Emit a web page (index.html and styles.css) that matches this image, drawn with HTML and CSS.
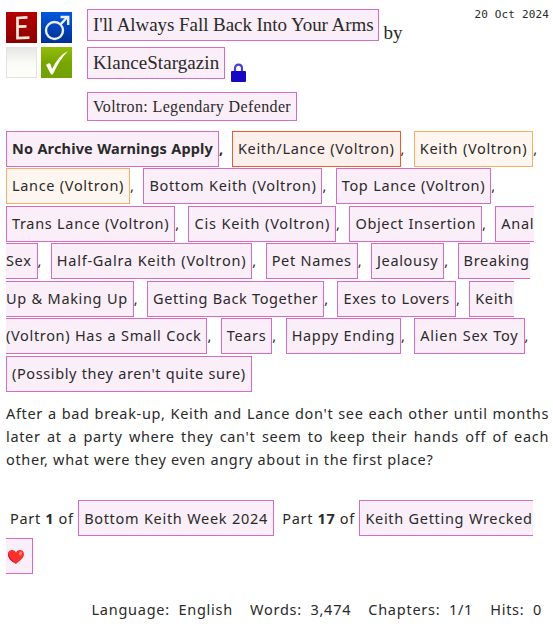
FILE: index.html
```
<!DOCTYPE html>
<html lang="en">
<head>
  <meta charset="UTF-8">
  <title>I'll Always Fall Back Into Your Arms</title>
  <link rel="stylesheet" href="styles.css">
</head>
<body>
  <article class="blurb">
    <header class="header">
      <div class="required-tags">
        <svg class="symbol" viewBox="0 0 31 31">
          <defs>
            <linearGradient id="red" x2="0" y2="1"><stop offset="0" stop-color="#b50000"/><stop offset="1" stop-color="#8c0000"/></linearGradient>
            <linearGradient id="blue" x2="0" y2="1"><stop offset="0" stop-color="#0057e0"/><stop offset="1" stop-color="#003193"/></linearGradient>
            <linearGradient id="green" x2="0" y2="1"><stop offset="0" stop-color="#91bd0b"/><stop offset=".5" stop-color="#78a600"/><stop offset="1" stop-color="#72a000"/></linearGradient>
            <linearGradient id="blank" x2="0" y2="1"><stop offset="0" stop-color="#e6e6e6"/><stop offset=".5" stop-color="#fafaf7"/><stop offset="1" stop-color="#fffffa"/></linearGradient>
          </defs>
          <rect width="31" height="31" fill="url(#red)"/>
          <path d="M21.500 5.3L11.500 6V26L23.500 25.7M11 14.7L20.5 14.3" fill="none" stroke="#eee9dc" stroke-width="2.7"/>
        </svg>
        <svg class="symbol" viewBox="0 0 31 31">
          <rect width="31" height="31" fill="url(#blue)"/>
          <circle cx="13.5" cy="18.5" r="8.5" fill="none" stroke="#e9eee9" stroke-width="2.4"/>
          <path d="M19.5 12.300L26.5 5M19.5 5H27.2V13" fill="none" stroke="#e9eee9" stroke-width="2.4"/>
        </svg>
        <svg class="symbol" viewBox="0 0 31 31">
          <rect x=".5" y=".5" width="30" height="30" fill="url(#blank)" stroke="#e3e3e3"/>
        </svg>
        <svg class="symbol" viewBox="0 0 31 31">
          <rect width="31" height="31" fill="url(#green)"/>
          <path d="M5 18Q8 15 9.500 17L11 22Q18 8 27 4Q19 12 12.500 26Q11 29 9.500 26.500Z" fill="#fffff6"/>
        </svg>
      </div>
      <div class="heading">
        <h4 class="title"><a class="tag work">I'll Always Fall Back Into Your Arms</a> <span class="by">by</span></h4>
        <h4 class="title"><a class="tag author">KlanceStargazin</a>
          <svg class="lock" viewBox="0 0 15 19">
            <path d="M4 9V5.500Q4 1.700 7.500 1.700T11 5.500V9" fill="none" stroke="#4a3fd0" stroke-width="2.2"/>
            <rect y="8" width="15" height="11" rx="1" fill="#1608c4"/>
          </svg>
        </h4>
        <h5 class="fandom"><a class="tag">Voltron: Legendary Defender</a></h5>
      </div>
      <p class="date">20 Oct 2024</p>
    </header>

    <div class="tags">
      <strong class="warning"><a class="tag">No Archive Warnings Apply</a>,</strong>
      <a class="tag relationship">Keith/Lance (Voltron)</a>,
      <a class="tag character">Keith (Voltron)</a>,<br>
      <a class="tag character">Lance (Voltron)</a>,
      <a class="tag">Bottom Keith (Voltron)</a>,
      <a class="tag">Top Lance (Voltron)</a>,<br>
      <a class="tag">Trans Lance (Voltron)</a>,
      <a class="tag wide">Cis Keith (Voltron)</a>,
      <a class="tag">Object Insertion</a>,
      <a class="tag">Anal<br>Sex</a>,
      <a class="tag wide">Half-Galra Keith (Voltron)</a>,
      <a class="tag">Pet Names</a>,
      <a class="tag">Jealousy</a>,
      <a class="tag">Breaking<br>Up &amp; Making Up</a>,
      <a class="tag narrow">Getting Back Together</a>,
      <a class="tag">Exes to Lovers</a>,
      <a class="tag">Keith<br>(Voltron) Has a Small Cock</a>,
      <a class="tag">Tears</a>,
      <a class="tag">Happy Ending</a>,
      <a class="tag wide">Alien Sex Toy</a>,<br>
      <a class="tag narrow">(Possibly they aren't quite sure)</a>
    </div>

    <p class="summary">After a bad break-up, Keith and Lance don't see each other until months later at a party where they can't seem to keep their hands off of each other, what were they even angry about in the first place?</p>

    <div class="series">
      <span class="part">Part <strong>1</strong> of <a class="tag">Bottom Keith Week 2024</a></span>
      <span class="part second">Part <strong>17</strong> of <a class="tag">Keith Getting Wrecked<br><svg class="heart" viewBox="0 0 16 14">
        <path d="M8 14C5.500 11.500 0 8.500 0 4.200C0-.5 6-1.400 8 2.500C10-1.400 16-.5 16 4.200C16 8.500 10.500 11.500 8 14Z" fill="#f92f2c"/>
        <path d="M1 2C-.5 6 3 9 8 14C3 11.500 0 8 0 4.500Q0 3 1 2Z" fill="#c9123f"/>
        <ellipse cx="12.500" cy="3.500" rx="1.500" ry="2" fill="#ff8274" transform="rotate(30 12.5 3.5)"/>
      </svg></a></span>
    </div>

    <dl class="stats">
      <dt>Language:</dt><dd>English</dd>
      <dt>Words:</dt><dd>3,474</dd>
      <dt>Chapters:</dt><dd>1/1</dd>
      <dt>Hits:</dt><dd>0</dd>
    </dl>
  </article>
</body>
</html>
```

FILE: styles.css
```
body {
  margin: 0;
  background: #fff;
  color: #2a2a2a;
  font-family: "Noto Sans", "Open Sans", sans-serif;
  font-size: 14.5px;
  letter-spacing: 0.66px;
}

.blurb {
  padding: 9px 4px 0 6px;
}

.header {
  display: flex;
  height: 120.7px;
}

.required-tags {
  display: grid;
  grid-template-columns: 31px 31px;
  grid-template-rows: 31px 31px;
  align-content: start;
  gap: 4px;
  padding-top: 3px;
}

.symbol {
  display: block;
  width: 31px;
  height: 31px;
}

.heading {
  flex: 1;
  margin-left: 15px;
  white-space: nowrap;
}

.title,
.fandom {
  display: flex;
  margin: 0;
  font-family: "Liberation Serif", serif;
  font-weight: normal;
  letter-spacing: 0;
}

.title {
  height: 38px;
  font-size: 19px;
  line-height: 30px;
}

.title .tag,
.fandom .tag {
  padding: 0 5px;
  word-spacing: 0;
}

.title .tag {
  height: 30px;
}

.work {
  letter-spacing: -0.06px;
}

.author {
  letter-spacing: 0.07px;
}

.by {
  margin: 9px 0 0 4px;
}

.lock {
  width: 15px;
  height: 19px;
  margin: 16px 0 0 6px;
}

.fandom {
  margin-top: 7px;
  font-size: 16px;
  letter-spacing: 0.37px;
}

.fandom .tag {
  height: 27px;
  line-height: 27px;
}

.date {
  margin: -1px 0 0;
  font: 11px/13px "DejaVu Sans Mono", monospace;
  letter-spacing: 0.15px;
}

.tag {
  padding: 6px 5px 8px;
  border: 1px solid #d56cc0;
  background: #faeef9;
  word-spacing: 0.3px;
}

.wide {
  letter-spacing: 0.75px;
}

.narrow {
  letter-spacing: 0.6px;
}

.relationship {
  border-color: #ee5a32;
  background: #fdefeb;
}

.character {
  border-color: #f9ae67;
  background: #fff7ef;
}

.tags,
.series {
  line-height: 37.5px;
  white-space: nowrap;
}

.tags {
  word-spacing: 4.3px;
}

.warning {
  letter-spacing: 0.16px;
}

.summary {
  margin: 10px 0 0;
  line-height: 23px;
  text-align: justify;
}

.series {
  margin-top: 29px;
}

.series .part {
  margin-left: 4px;
}

.series .tag {
  padding: 7px 5px;
  letter-spacing: 0.68px;
}

.heart {
  width: 16px;
  height: 14px;
  margin: 0 3px 0 2px;
  vertical-align: -2px;
}

.stats {
  display: flex;
  justify-content: flex-end;
  margin: 23px 7px 0 0;
  line-height: 23px;
  letter-spacing: 0.75px;
}

.stats dd {
  margin: 0 17px 0 8.5px;
}

.stats dd:last-child {
  margin-right: 0;
}
```
